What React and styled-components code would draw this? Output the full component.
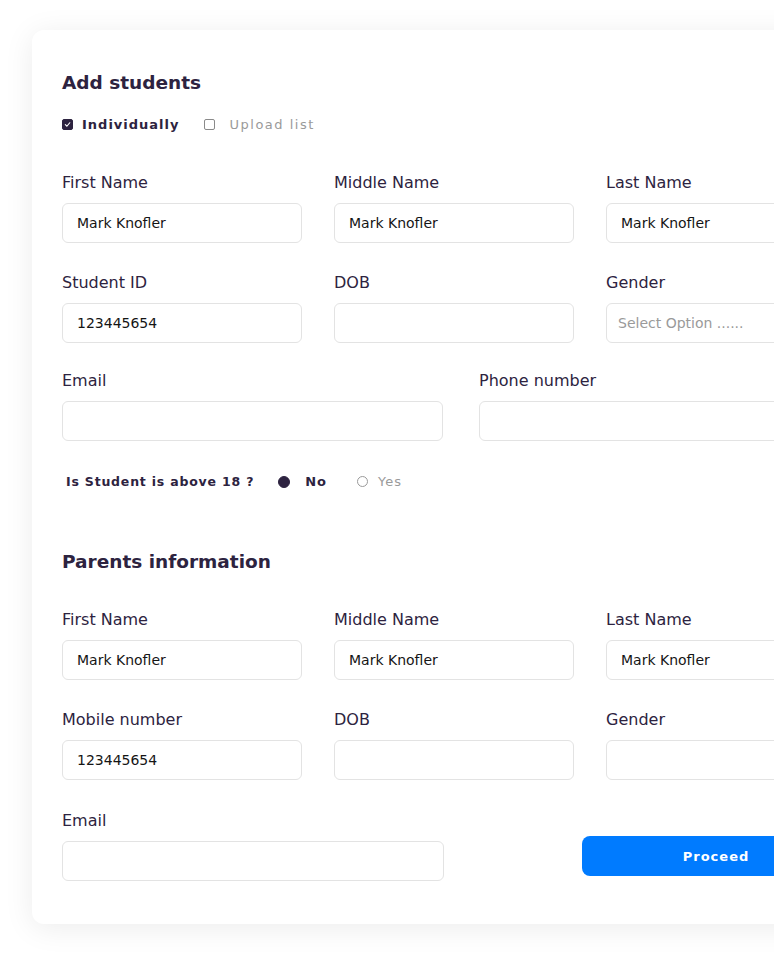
import React from "react";
import styled, { createGlobalStyle } from "styled-components";

const GlobalStyle = createGlobalStyle`
  html, body {
    margin: 0;
    padding: 0;
    background: #ffffff;
    overflow: hidden;
    font-family: "DejaVu Sans", "Open Sans", sans-serif;
  }
`;

const Page = styled.div`
  padding: 30px 0 34px 32px;
  width: 900px;
`;

const Card = styled.div`
  width: 840px;
  background: #ffffff;
  border-radius: 12px;
  box-shadow: 0 4px 30px rgba(0, 0, 0, 0.08);
  padding: 41px 30px 43px 30px;
  box-sizing: border-box;
`;

const Title = styled.h2`
  margin: 0;
  font-size: 18.5px;
  font-weight: 600;
  color: #2d2340;
  line-height: 24px;
`;

const ModeRow = styled.div`
  display: flex;
  align-items: center;
  gap: 24px;
  margin-top: 22px;
`;

const Check = styled.label`
  display: flex;
  align-items: center;
  gap: ${(p) => (p.$on ? "9px" : "15px")};
  font-size: 13px;
  letter-spacing: ${(p) => (p.$on ? "1px" : "1.5px")};
  font-weight: ${(p) => (p.$on ? 700 : 400)};
  color: ${(p) => (p.$on ? "#2d2340" : "#9a9a9a")};
`;

const Box = styled.span`
  width: 11px;
  height: 11px;
  box-sizing: border-box;
  border-radius: 2px;
  display: flex;
  align-items: center;
  justify-content: center;
  background: ${(p) => (p.$on ? "#2d2340" : "#fff")};
  border: 1px solid ${(p) => (p.$on ? "#2d2340" : "#8a8a8a")};
`;

const Grid = styled.div`
  display: grid;
  grid-template-columns: ${(p) => p.$cols};
  column-gap: ${(p) => p.$gap || "32px"};
  row-gap: 30px;
  margin-top: ${(p) => p.$top || "0"};
`;

const Field = styled.div`
  display: flex;
  flex-direction: column;
`;

const Label = styled.div`
  font-size: 16px;
  color: #2d2340;
  line-height: 20px;
  margin-bottom: 10px;
`;

const Input = styled.div`
  height: 40px;
  box-sizing: border-box;
  border: 1px solid #e3e3e3;
  border-radius: 6px;
  padding: 0 ${(p) => (p.$placeholder ? "11px" : "14px")};
  display: flex;
  align-items: center;
  font-size: 14px;
  color: ${(p) => (p.$placeholder ? "#9a9a9a" : "#151515")};
`;

const AgeRow = styled.div`
  display: flex;
  align-items: center;
  margin-top: 33px;
  padding-left: 4px;
  font-size: 12.5px;
  letter-spacing: 0.8px;
`;

const Question = styled.span`
  font-weight: 700;
  color: #2d2340;
  margin-right: 24px;
`;

const Radio = styled.label`
  display: flex;
  align-items: center;
  gap: ${(p) => (p.$on ? "15px" : "10px")};
  margin-right: 30px;
  font-size: 13px;
  letter-spacing: 1px;
  font-weight: ${(p) => (p.$on ? 700 : 400)};
  color: ${(p) => (p.$on ? "#2d2340" : "#9a9a9a")};
`;

const Dot = styled.span`
  width: ${(p) => (p.$on ? "12px" : "11px")};
  height: ${(p) => (p.$on ? "12px" : "11px")};
  box-sizing: border-box;
  border-radius: 50%;
  background: ${(p) => (p.$on ? "#2d2340" : "#fff")};
  border: 1px solid ${(p) => (p.$on ? "#2d2340" : "#9a9a9a")};
`;

const SubTitle = styled(Title)`
  margin-top: 61px;
  margin-bottom: 36px;
`;

const ButtonCell = styled.div`
  display: flex;
  align-items: flex-end;
  padding-bottom: 5px;
`;

const Button = styled.button`
  width: 268px;
  height: 40px;
  border: none;
  border-radius: 8px;
  background: #007bff;
  color: #ffffff;
  font-family: inherit;
  font-size: 13px;
  font-weight: 600;
  letter-spacing: 1px;
`;

const CheckMark = () => (
  <svg width="7" height="7" viewBox="0 0 8 8">
    <path d="M1.5 4.2 L3.3 6 L6.6 2" stroke="#fff" strokeWidth="1.3" fill="none" strokeLinecap="round" />
  </svg>
);

const FieldBox = ({ label, value, placeholder }) => (
  <Field>
    <Label>{label}</Label>
    <Input $placeholder={!!placeholder}>{value || placeholder}</Input>
  </Field>
);

export default function App() {
  return (
    <Page>
      <GlobalStyle />
      <Card>
        <Title>Add students</Title>
        <ModeRow>
          <Check $on>
            <Box $on>
              <CheckMark />
            </Box>
            Individually
          </Check>
          <Check>
            <Box />
            Upload list
          </Check>
        </ModeRow>

        <Grid $cols="240px 240px 240px" $top="41px">
          <FieldBox label="First Name" value="Mark Knofler" />
          <FieldBox label="Middle Name" value="Mark Knofler" />
          <FieldBox label="Last Name" value="Mark Knofler" />
          <FieldBox label="Student ID" value="123445654" />
          <FieldBox label="DOB" />
          <FieldBox label="Gender" placeholder="Select Option ......" />
        </Grid>
        <Grid $cols="381px 381px" $gap="36px" $top="28px">
          <FieldBox label="Email" />
          <FieldBox label="Phone number" />
        </Grid>

        <AgeRow>
          <Question>Is Student is above 18 ?</Question>
          <Radio $on>
            <Dot $on />
            No
          </Radio>
          <Radio>
            <Dot />
            Yes
          </Radio>
        </AgeRow>

        <SubTitle>Parents information</SubTitle>

        <Grid $cols="240px 240px 240px">
          <FieldBox label="First Name" value="Mark Knofler" />
          <FieldBox label="Middle Name" value="Mark Knofler" />
          <FieldBox label="Last Name" value="Mark Knofler" />
          <FieldBox label="Mobile number" value="123445654" />
          <FieldBox label="DOB" />
          <FieldBox label="Gender" />
        </Grid>
        <Grid $cols="382px 138px 268px" $gap="0px" $top="31px">
          <FieldBox label="Email" />
          <div />
          <ButtonCell>
            <Button>Proceed</Button>
          </ButtonCell>
        </Grid>
      </Card>
    </Page>
  );
}
